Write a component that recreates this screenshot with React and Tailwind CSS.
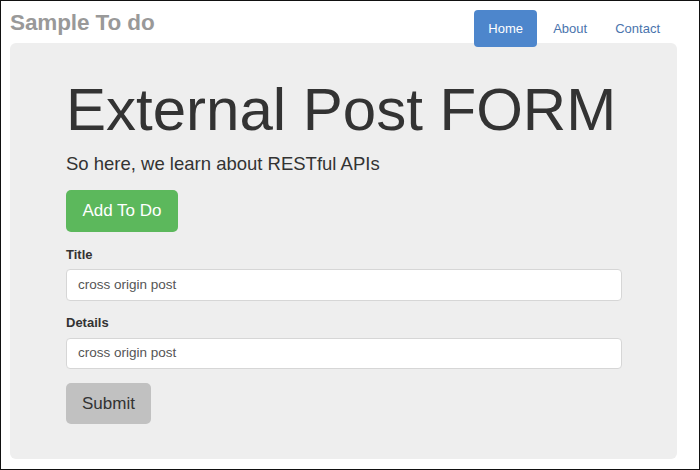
export default function App() {
  return (
    <div
      className="w-[700px] h-[470px] border border-[#111] bg-white overflow-hidden"
      style={{ fontFamily: '"Liberation Sans", Arial, sans-serif' }}
    >
      <div className="flex items-start justify-between pl-[9px] pr-[39px]">
        <div className="pt-[9px] text-[22.5px] font-bold text-[#999] leading-[26px] tracking-[-0.1px]">
          Sample To do
        </div>
        <nav className="flex items-center pt-[9px] text-[13px]">
          <a className="flex h-[37px] w-[63px] items-center justify-center rounded-[4px] bg-[#4d86cc] text-white">
            Home
          </a>
          <a className="px-[16px] text-[#4a74ad]">About</a>
          <a className="pl-[12px] text-[#4a74ad]">Contact</a>
        </nav>
      </div>
      <div className="mx-[9px] mt-[-4px] h-[416px] w-[667px] rounded-[6px] bg-[#eeeeee] pl-[56px] pr-[55px] pt-[35px]">
        <h1 className="text-[60px] leading-[64px] text-[#333] tracking-[0px]">External Post FORM</h1>
        <p className="mt-[10px] text-[18.5px] leading-[24px] text-[#333]">So here, we learn about RESTful APIs</p>
        <button className="mt-[14px] h-[42px] w-[112px] rounded-[5px] bg-[#5cb85c] text-[17px] text-white">
          Add To Do
        </button>
        <div className="mt-[15px] text-[13px] font-bold leading-[16px] text-[#333]">Title</div>
        <div className="mt-[6px] flex h-[32px] items-center rounded-[4px] border border-[#d6d6d6] bg-white px-[11px] text-[13.5px] text-[#555]">
          cross origin post
        </div>
        <div className="mt-[14px] text-[13px] font-bold leading-[16px] text-[#333]">Details</div>
        <div className="mt-[7px] flex h-[31px] items-center rounded-[4px] border border-[#d6d6d6] bg-white px-[11px] text-[13.5px] text-[#555]">
          cross origin post
        </div>
        <button className="mt-[14px] h-[41px] w-[85px] rounded-[5px] bg-[#c1c1c1] text-[17px] text-[#333]">
          Submit
        </button>
      </div>
    </div>
  );
}
